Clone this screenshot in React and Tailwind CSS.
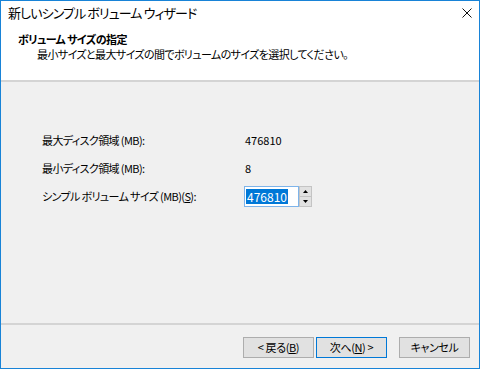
const font = "font-['Noto_Sans_CJK_JP','Noto_Sans',sans-serif] [font-feature-settings:'palt']";

const Button = ({ children, primary }) => (
  <button
    className={`h-[21px] w-[71px] text-[11px] tracking-[-0.4px] leading-none text-black bg-[#e1e1e1] border ${
      primary ? "border-[#0078d7]" : "border-[#adadad]"
    }`}
  >
    {children}
  </button>
);

const Row = ({ label, children }) => (
  <div className="flex items-center h-[21px] text-[11px] text-black">
    <div className="w-[203px] tracking-[-0.6px]">{label}</div>
    {children}
  </div>
);

export default function App() {
  return (
    <div className={`w-[480px] h-[369px] border border-[#1883d7] bg-white flex flex-col ${font}`}>
      <div className="h-[30px] flex items-start justify-between pl-[7px] pr-[7px] pt-[4px]">
        <span className="text-[13px] leading-[16px] tracking-[-0.9px] text-black">新しいシンプル ボリューム ウィザード</span>
        <svg width="10" height="10" viewBox="0 0 10 10" className="mt-[3px]">
          <path d="M0.5 0.5 L9.5 9.5 M9.5 0.5 L0.5 9.5" stroke="#111" strokeWidth="1" />
        </svg>
      </div>
      <div className="h-[49px] pl-[17px] pt-[1px] text-[11px] text-black tracking-[-0.6px]">
        <div className="font-bold leading-[15px]">ボリューム サイズの指定</div>
        <div className="pl-[19px] leading-[15px]">最小サイズと最大サイズの間でボリュームのサイズを選択してください。</div>
      </div>
      <div className="flex-1 bg-[#f0f0f0] border-t-2 border-[#d4d4d4] pl-[41px] pt-[48px] flex flex-col gap-[7px]">
        <Row label="最大ディスク領域 (MB):">
          <span>476810</span>
        </Row>
        <Row label="最小ディスク領域 (MB):">
          <span>8</span>
        </Row>
        <Row label={<>シンプル ボリューム サイズ (MB)(<u>S</u>):</>}>
          <div className="flex h-[21px] ml-[-1px]">
            <div className="w-[55px] h-[21px] bg-white border border-[#7eb4ea] flex items-center pl-[1px]">
              <span className="bg-[#0078d7] text-white text-[12px] leading-[15px] px-[1px]">476810</span>
            </div>
            <div className="w-[13px] h-[21px] flex flex-col bg-[#e1e1e1] border border-[#c4c4c4]">
              <div className="flex-1 flex items-center justify-center border-b border-[#c4c4c4]">
                <svg width="5" height="3" viewBox="0 0 5 3"><path d="M2.5 0 L5 3 L0 3 Z" fill="#000" /></svg>
              </div>
              <div className="flex-1 flex items-center justify-center">
                <svg width="5" height="3" viewBox="0 0 5 3"><path d="M0 0 L5 0 L2.5 3 Z" fill="#000" /></svg>
              </div>
            </div>
          </div>
        </Row>
      </div>
      <div className="h-[45px] bg-[#f0f0f0] border-t-2 border-[#d4d4d4] flex items-start pt-[12px] pl-[242px]">
        <Button>&lt; 戻る(<u>B</u>)</Button>
        <div className="w-[2px]" />
        <Button primary>次へ(<u>N</u>) &gt;</Button>
        <div className="w-[12px]" />
        <Button>キャンセル</Button>
      </div>
    </div>
  );
}
